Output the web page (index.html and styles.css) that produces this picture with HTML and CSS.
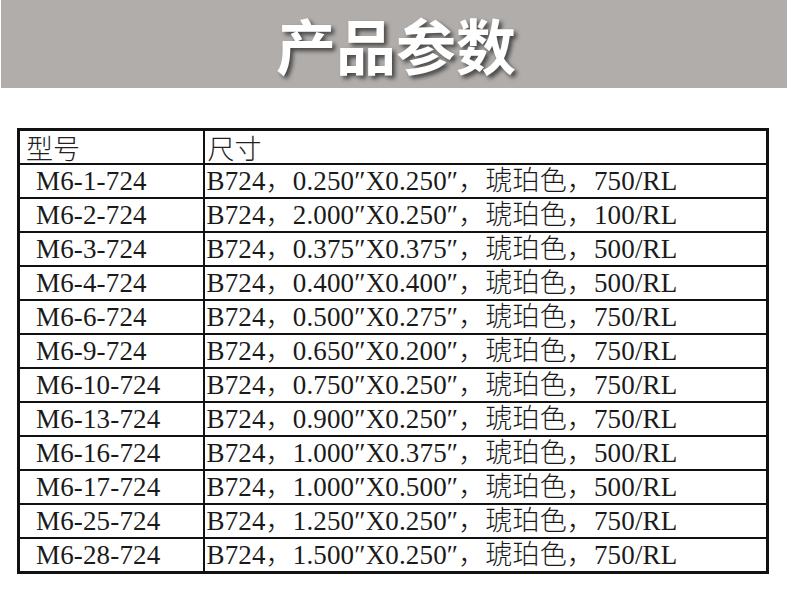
FILE: index.html
```html
<!DOCTYPE html>
<html lang="zh-CN">
<head>
<meta charset="utf-8">
<title>产品参数</title>
<link rel="stylesheet" href="styles.css">
</head>
<body>
<header class="banner"><h1 class="banner-title">产品参数</h1></header>
<table class="spec">
  <colgroup><col class="col-model"><col class="col-size"></colgroup>
  <thead>
    <tr class="head"><th>型号</th><th>尺寸</th></tr>
  </thead>
  <tbody>
    <tr><td>M6-1-724</td><td>B724，0.250″X0.250″，琥珀色，750/RL</td></tr>
    <tr><td>M6-2-724</td><td>B724，2.000″X0.250″，琥珀色，100/RL</td></tr>
    <tr><td>M6-3-724</td><td>B724，0.375″X0.375″，琥珀色，500/RL</td></tr>
    <tr><td>M6-4-724</td><td>B724，0.400″X0.400″，琥珀色，500/RL</td></tr>
    <tr><td>M6-6-724</td><td>B724，0.500″X0.275″，琥珀色，750/RL</td></tr>
    <tr><td>M6-9-724</td><td>B724，0.650″X0.200″，琥珀色，750/RL</td></tr>
    <tr><td>M6-10-724</td><td>B724，0.750″X0.250″，琥珀色，750/RL</td></tr>
    <tr><td>M6-13-724</td><td>B724，0.900″X0.250″，琥珀色，750/RL</td></tr>
    <tr><td>M6-16-724</td><td>B724，1.000″X0.375″，琥珀色，500/RL</td></tr>
    <tr><td>M6-17-724</td><td>B724，1.000″X0.500″，琥珀色，500/RL</td></tr>
    <tr><td>M6-25-724</td><td>B724，1.250″X0.250″，琥珀色，750/RL</td></tr>
    <tr><td>M6-28-724</td><td>B724，1.500″X0.250″，琥珀色，750/RL</td></tr>
  </tbody>
</table>
</body>
</html>
```
FILE: styles.css
```css
html, body {
  margin: 0;
  padding: 0;
  background: #ffffff;
}
body {
  width: 790px;
  font-family: "Liberation Serif", "Noto Sans CJK SC", serif;
}
.banner {
  height: 88px;
  margin: 0 3px 0 1px;
  background: #b0adab;
  display: flex;
  align-items: center;
  justify-content: center;
}
.banner-title {
  margin: 0 0 0 4px;
  font-family: "Noto Sans CJK SC", sans-serif;
  font-weight: 700;
  font-size: 60px;
  line-height: 88px;
  color: #ffffff;
  text-shadow: 3px 3px 4px rgba(0, 0, 0, 0.6);
}
.spec {
  margin: 40px 0 0 17px;
  width: 752px;
  table-layout: fixed;
  border-collapse: collapse;
  border: 3px solid #111;
  color: #1a1a1a;
}
.col-model { width: 185px; }
.spec th,
.spec td {
  border: 2px solid #111;
  padding: 0;
  text-align: left;
  white-space: nowrap;
}
.spec th {
  font-family: "Noto Sans CJK SC", sans-serif;
  font-weight: 300;
  font-size: 27px;
  line-height: 30px;
  height: 30px;
  padding: 2px 0 0 6px;
  box-sizing: border-box;
  color: #222;
  vertical-align: bottom;
}
.spec th + th { padding-left: 3px; }
.spec td {
  font-size: 27px;
  font-weight: 300;
  line-height: 32px;
  height: 32px;
  padding-left: 2px;
  letter-spacing: 0.15px;
}
.spec td:first-child { padding-left: 16px; }
```
